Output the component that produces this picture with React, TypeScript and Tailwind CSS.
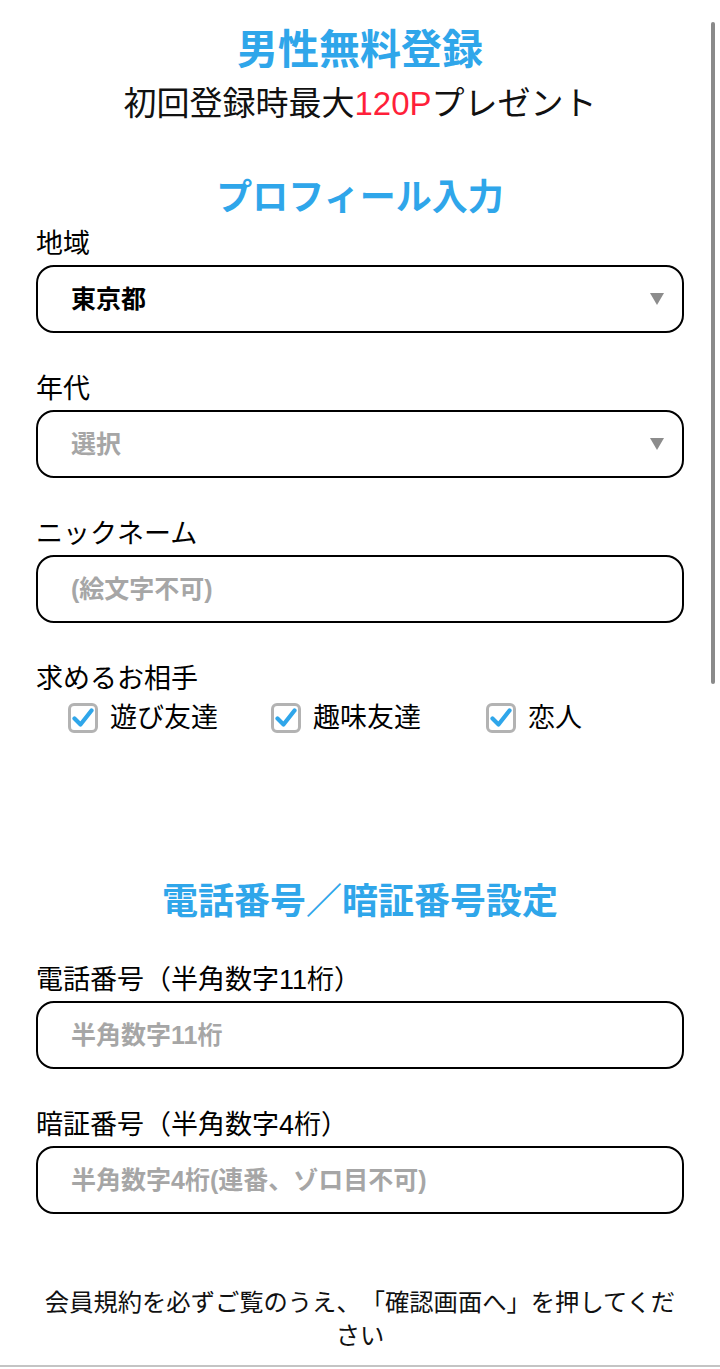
import React from "react";

const font = {
  fontFamily: '"Liberation Sans", "Noto Sans CJK JP", sans-serif',
};

const Arrow = () => (
  <svg width="14" height="12" viewBox="0 0 14 12" className="shrink-0">
    <polygon points="0,0 14,0 7,12" fill="#8c8c8c" />
  </svg>
);

const Check = () => (
  <span className="flex h-[30px] w-[30px] shrink-0 items-center justify-center rounded-[6px] border-[3px] border-[#b3b3b3] bg-white">
    <svg width="22" height="20" viewBox="0 0 22 20">
      <path
        d="M2.5 10.5 L8.5 16.5 L19.5 2.5"
        fill="none"
        stroke="#2fa6ea"
        strokeWidth="4.2"
        strokeLinecap="round"
        strokeLinejoin="round"
      />
    </svg>
  </span>
);

const Label = ({ children, className = "" }: { children: React.ReactNode; className?: string }) => (
  <div className={`text-[27px] leading-[32px] text-black [text-spacing-trim:space-all] ${className}`}>
    {children}
  </div>
);

const Field = ({
  text,
  muted,
  select,
}: {
  text: string;
  muted?: boolean;
  select?: boolean;
}) => (
  <div className="mt-[5px] flex h-[68px] items-center justify-between rounded-[18px] border-2 border-black bg-white pl-[33px] pr-[18px]">
    <span
      className={`text-[25px] font-bold leading-none [text-spacing-trim:space-all] ${
        muted ? "text-[#a6a6a6]" : "text-black"
      }`}
    >
      {text}
    </span>
    {select && <Arrow />}
  </div>
);

const Partner = ({ label, className = "" }: { label: string; className?: string }) => (
  <div className={`flex items-center gap-[12px] ${className}`}>
    <Check />
    <span className="text-[27px] leading-[36px] text-black">{label}</span>
  </div>
);

export default function App() {
  return (
    <div className="relative min-h-[1369px] w-[720px] bg-white" style={font}>
      {/* overlay scrollbar */}
      <div className="absolute left-[711px] top-[22px] h-[662px] w-[4px] rounded-full bg-[#8a8a8a]" />

      <div className="px-[36px] pt-[26px]">
        <h1 className="text-center text-[41px] font-bold leading-[49px] text-[#2fa6ea]">
          男性無料登録
        </h1>
        <p className="mt-[9px] text-center text-[33px] leading-[40px] text-[#111]">
          初回登録時最大<span className="text-[#ff1f3a]">120P</span>プレゼント
        </p>

        <h2 className="mt-[52px] text-center text-[36px] font-bold leading-[44px] text-[#2fa6ea]">
          プロフィール入力
        </h2>

        <Label className="mt-[8px]">地域</Label>
        <Field text="東京都" select />

        <Label className="mt-[40px]">年代</Label>
        <Field text="選択" muted select />

        <Label className="mt-[40px]">ニックネーム</Label>
        <Field text="(絵文字不可)" muted />

        <Label className="mt-[40px]">求めるお相手</Label>
        <div className="mt-[5px] flex pl-[32px]">
          <Partner label="遊び友達" className="w-[203px]" />
          <Partner label="趣味友達" className="w-[215px]" />
          <Partner label="恋人" />
        </div>

        <h2 className="mt-[144px] text-center text-[36px] font-bold leading-[44px] text-[#2fa6ea]">
          電話番号／暗証番号設定
        </h2>

        <Label className="mt-[40px]">電話番号（半角数字11桁）</Label>
        <Field text="半角数字11桁" muted />

        <Label className="mt-[40px]">暗証番号（半角数字4桁）</Label>
        <Field text="半角数字4桁(連番、ゾロ目不可)" muted />

        <p className="mx-auto mt-[72px] w-[640px] text-center text-[24.3px] leading-[33px] text-[#111] [text-spacing-trim:space-all]">
          会員規約を必ずご覧のうえ、「確認画面へ」を押してください
        </p>
      </div>

      <div className="mt-[13px] border-t-2 border-[#c4c4c4]" />
    </div>
  );
}
